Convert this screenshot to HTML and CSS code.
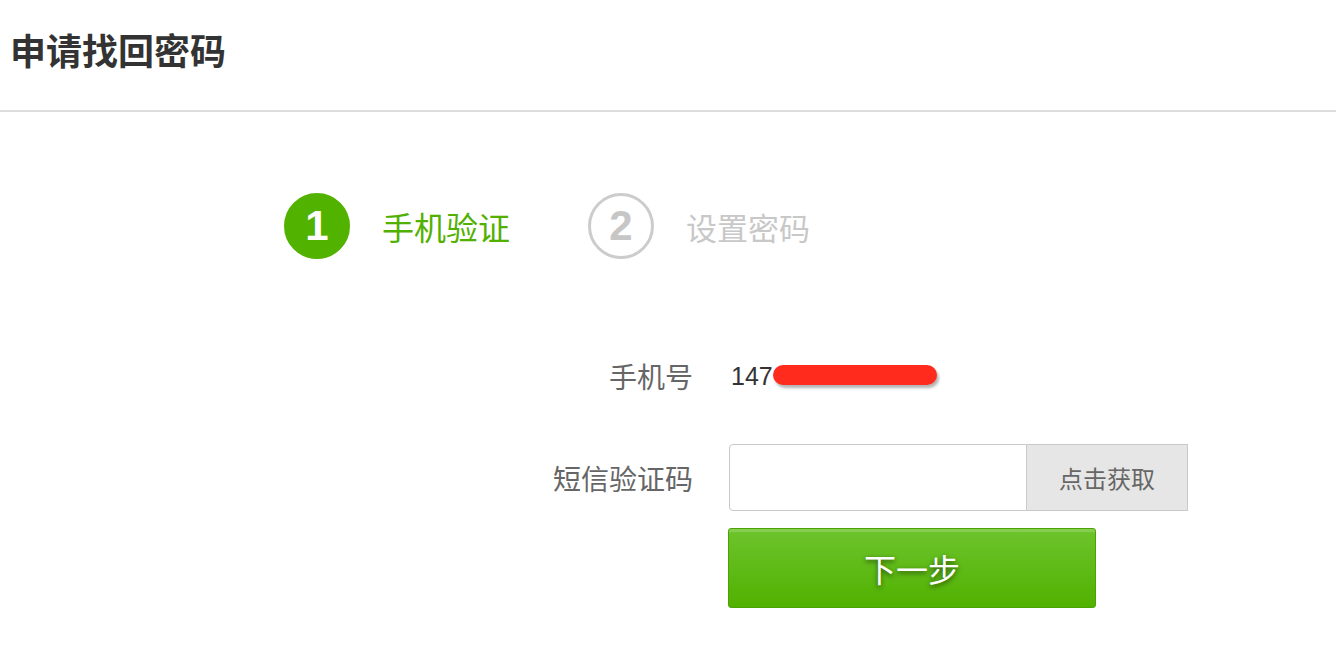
FILE: index.html
```html
<!DOCTYPE html>
<html lang="zh-CN">
<head>
<meta charset="utf-8">
<title>申请找回密码</title>
<link rel="stylesheet" href="styles.css">
</head>
<body>
<div class="header"><h1 class="title">申请找回密码</h1></div>
<div class="steps">
  <div class="step active">
    <span class="circle">1</span>
    <span class="step-text">手机验证</span>
  </div>
  <div class="step">
    <span class="circle">2</span>
    <span class="step-text">设置密码</span>
  </div>
</div>
<form class="form">
  <div class="row phone-row">
    <label class="label">手机号</label>
    <span class="value">147<span class="mask"></span></span>
  </div>
  <div class="row sms-row">
    <label class="label">短信验证码</label>
    <div class="code-group">
      <input class="code-input" type="text">
      <button type="button" class="get-code">点击获取</button>
    </div>
  </div>
  <div class="row btn-row">
    <span class="label"></span>
    <button type="button" class="next">下一步</button>
  </div>
</form>
</body>
</html>
```
FILE: styles.css
```css
* { box-sizing: border-box; }
body {
  margin: 0;
  background: #fff;
  font-family: "Noto Sans CJK SC", "Microsoft YaHei", sans-serif;
  color: #333;
}
.header {
  height: 112px;
  border-bottom: 2px solid #dcdcdc;
  padding-left: 10px;
}
.title {
  margin: 0;
  font-size: 36px;
  line-height: 98px;
  font-weight: bold;
  color: #333;
}
.steps {
  display: flex;
  align-items: center;
  gap: 78px;
  margin-top: 81px;
  padding-left: 284px;
  height: 66px;
}
.step {
  display: flex;
  align-items: center;
  gap: 32px;
}
.circle {
  width: 66px;
  height: 66px;
  border-radius: 50%;
  display: flex;
  align-items: center;
  justify-content: center;
  font-family: "Liberation Sans", Arial, sans-serif;
  font-weight: bold;
  font-size: 42px;
  border: 3px solid #cccccc;
  color: #c6c6c6;
}
.step.active .circle {
  background: #52b200;
  border-color: #52b200;
  color: #fff;
}
.step-text {
  font-size: 31px;
  color: #c8c8c8;
}
.step.active .step-text { color: #52b000; font-size: 32px; }
.form {
  margin-top: 97px;
  display: flex;
  flex-direction: column;
}
.row {
  display: grid;
  grid-template-columns: 693px auto;
  column-gap: 36px;
  align-items: center;
}
.phone-row { height: 40px; }
.sms-row { margin-top: 48px; }
.btn-row { margin-top: 17px; column-gap: 35px; }
.label {
  text-align: right;
  font-size: 28px;
  color: #666;
}
.value {
  position: relative;
  font-family: "Liberation Sans", Arial, sans-serif;
  font-size: 25px;
  color: #333;
  margin-left: 2px;
}
.mask {
  position: absolute;
  left: 42px;
  top: 3px;
  width: 164px;
  height: 20px;
  border-radius: 10px;
  background: #ff2b1c;
  box-shadow: 2px 3px 3px rgba(0,0,0,0.3);
}
.code-group {
  display: flex;
  height: 67px;
}
.code-input {
  width: 298px;
  height: 67px;
  border: 1px solid #c9c9c9;
  border-radius: 4px 0 0 4px;
  font-size: 24px;
  padding: 0 10px;
  outline: none;
}
.get-code {
  width: 161px;
  height: 67px;
  border: 1px solid #c9c9c9;
  border-left: none;
  background: #e6e6e6;
  color: #666;
  font-family: inherit;
  font-size: 24px;
  padding: 0;
}
.next {
  width: 368px;
  height: 80px;
  border: 1px solid #4aa300;
  border-radius: 3px;
  background: linear-gradient(#6dc42d, #51b100);
  box-shadow: inset 0 3px 0 rgba(255,255,255,0.18);
  color: #fff;
  font-family: inherit;
  font-size: 32px;
  text-shadow: 0 2px 5px rgba(0,0,0,0.6);
  padding: 0;
}
```
